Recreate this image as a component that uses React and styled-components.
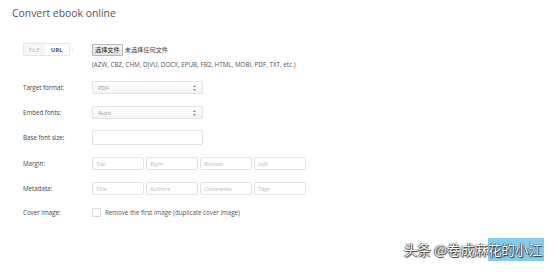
import React from "react";
import styled, { createGlobalStyle } from "styled-components";

const GlobalStyle = createGlobalStyle`
  html, body {
    margin: 0;
    padding: 0;
    background: #fff;
  }
  body {
    font-family: "Open Sans", "Noto Sans", sans-serif;
    color: #444;
  }
`;

const Page = styled.div`
  position: relative;
  width: 554px;
  height: 272px;
  overflow: hidden;
  padding: 6px 0 0 12px;
  box-sizing: border-box;
`;

const Title = styled.h1`
  margin: 0;
  font-size: 10.4px;
  line-height: 15px;
  font-weight: 400;
  color: #555;
`;

const Form = styled.div`
  display: flex;
  flex-direction: column;
  padding-left: 11px;
`;

const Row = styled.div`
  display: grid;
  grid-template-columns: 69px 1fr;
  align-items: center;
  margin-top: ${(p) => p.$top}px;
  height: ${(p) => p.$h}px;
`;

const Label = styled.div`
  font-size: 6.2px;
  color: #444;
  white-space: nowrap;
`;

const Toggle = styled.div`
  display: flex;
  align-items: center;
  gap: 2px;
`;

const ToggleBox = styled.div`
  display: flex;
  height: 11px;
  border: 1px solid #e6e6e6;
  border-radius: 2px;
  overflow: hidden;
`;

const ToggleItem = styled.span`
  display: flex;
  align-items: center;
  padding: 0 ${(p) => (p.$active ? 6 : 5)}px;
  font-size: 5.5px;
  font-weight: ${(p) => (p.$active ? 700 : 400)};
  color: ${(p) => (p.$active ? "#444" : "#bbb")};
  background: ${(p) => (p.$active ? "#fff" : "#f6f6f6")};
  letter-spacing: 0.2px;
`;

const Colon = styled.span`
  font-size: 6px;
  color: #999;
`;

const FileLine = styled.div`
  display: flex;
  align-items: center;
  gap: 2px;
  font-family: "Noto Sans CJK SC", "Noto Sans", sans-serif;
  font-size: 6.2px;
  color: #444;
`;

const FileButton = styled.span`
  display: inline-flex;
  align-items: center;
  height: 10px;
  padding: 0 2px;
  border: 1px solid #b8b8b8;
  border-radius: 1px;
  background: linear-gradient(#f6f6f6, #e4e4e4);
  color: #222;
`;

const Formats = styled.div`
  grid-column: 2;
  font-size: 6.3px;
  color: #555;
  white-space: nowrap;
`;

const Select = styled.div`
  width: 111px;
  height: 13px;
  box-sizing: border-box;
  display: flex;
  align-items: center;
  justify-content: space-between;
  padding: 0 6px 0 5px;
  border: 1px solid #e4e4e4;
  border-radius: 2px;
  background: linear-gradient(#fff, #f4f4f4);
  font-size: 6px;
  color: #999;
`;

const Arrows = styled.svg`
  width: 3px;
  height: 6px;
`;

const TextBox = styled.div`
  width: ${(p) => p.$w}px;
  height: ${(p) => p.$h}px;
  box-sizing: border-box;
  display: flex;
  align-items: center;
  padding-left: 3px;
  border: 1px solid #e2e2e2;
  border-radius: 2px;
  background: #fff;
  font-size: 5.8px;
  font-style: italic;
  color: #bbb;
`;

const Group = styled.div`
  display: flex;
  gap: 2px;
`;

const Check = styled.label`
  display: flex;
  align-items: center;
  gap: 4px;
  font-size: 6.2px;
  color: #555;
`;

const Box = styled.span`
  width: 9px;
  height: 9px;
  box-sizing: border-box;
  border: 1px solid #dcdcdc;
  border-radius: 1px;
  background: #fff;
`;

const Watermark = styled.div`
  position: absolute;
  right: 10px;
  bottom: 15px;
  font-family: "Noto Sans CJK SC", sans-serif;
  font-size: 13.6px;
  line-height: 15px;
  color: #fff;
  white-space: nowrap;
  text-shadow: 0 0 1px #222, 1px 1px 1px #333, -0.5px 0 1px #333;
`;

const Highlight = styled.span`
  background: rgba(110, 195, 230, 0.85);
  padding: 1px 2px 2px 0;
`;

function SelectField({ value }) {
  return (
    <Select>
      {value}
      <Arrows viewBox="0 0 3 6">
        <path d="M1.5 0 L3 2 H0 Z M0 4 H3 L1.5 6 Z" fill="#888" />
      </Arrows>
    </Select>
  );
}

export default function App() {
  return (
    <>
      <GlobalStyle />
      <Page>
        <Title>Convert ebook online</Title>
        <Form>
          <Row $top={22} $h={12}>
            <Toggle>
              <ToggleBox>
                <ToggleItem>FILE</ToggleItem>
                <ToggleItem $active>URL</ToggleItem>
              </ToggleBox>
              <Colon>:</Colon>
            </Toggle>
            <FileLine>
              <FileButton>选择文件</FileButton>
              未选择任何文件
            </FileLine>
          </Row>
          <Row $top={5} $h={8}>
            <Formats>
              (AZW, CBZ, CHM, DJVU, DOCX, EPUB, FB2, HTML, MOBI, PDF, TXT, etc.)
            </Formats>
          </Row>
          <Row $top={13} $h={13}>
            <Label>Target format:</Label>
            <SelectField value="PDF" />
          </Row>
          <Row $top={12} $h={13}>
            <Label>Embed fonts:</Label>
            <SelectField value="Auto" />
          </Row>
          <Row $top={11} $h={15}>
            <Label>Base font size:</Label>
            <TextBox $w={111} $h={15} />
          </Row>
          <Row $top={12} $h={13}>
            <Label>Margin:</Label>
            <Group>
              {["Top", "Right", "Bottom", "Left"].map((t) => (
                <TextBox key={t} $w={52} $h={13}>
                  {t}
                </TextBox>
              ))}
            </Group>
          </Row>
          <Row $top={12} $h={13}>
            <Label>Metadata:</Label>
            <Group>
              {["Title", "Authors", "Comments", "Tags"].map((t) => (
                <TextBox key={t} $w={52} $h={13}>
                  {t}
                </TextBox>
              ))}
            </Group>
          </Row>
          <Row $top={13} $h={9}>
            <Label>Cover image:</Label>
            <Check>
              <Box />
              Remove the first image (duplicate cover image)
            </Check>
          </Row>
        </Form>
        <Watermark>
          头条 @卷成麻<Highlight>花的小江</Highlight>
        </Watermark>
      </Page>
    </>
  );
}
